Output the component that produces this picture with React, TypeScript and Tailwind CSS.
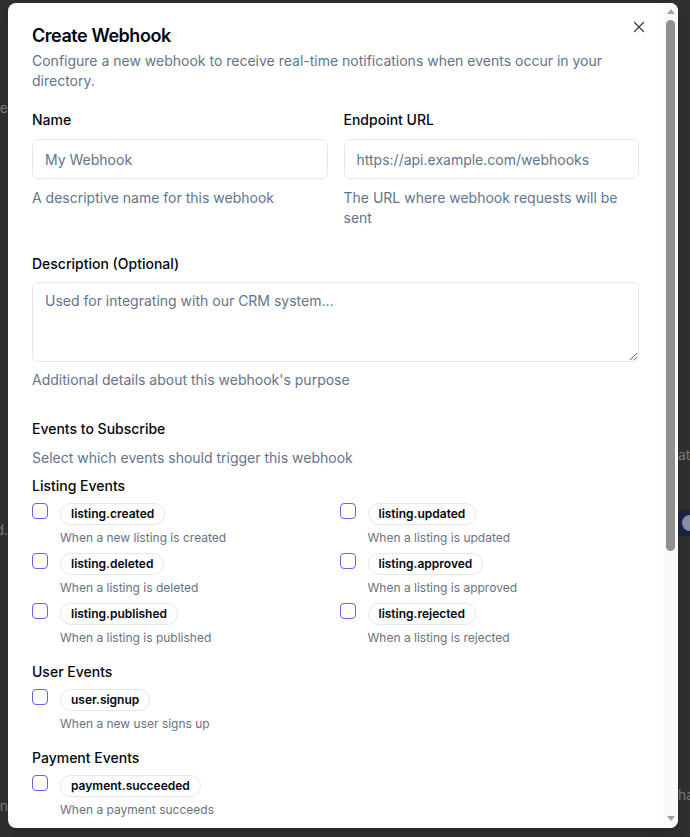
import { X } from "lucide-react";

type WebhookEvent = {
  name: string;
  description: string;
};

type EventGroup = {
  label: string;
  events: WebhookEvent[];
};

const eventGroups: EventGroup[] = [
  {
    label: "Listing Events",
    events: [
      { name: "listing.created", description: "When a new listing is created" },
      { name: "listing.updated", description: "When a listing is updated" },
      { name: "listing.deleted", description: "When a listing is deleted" },
      { name: "listing.approved", description: "When a listing is approved" },
      { name: "listing.published", description: "When a listing is published" },
      { name: "listing.rejected", description: "When a listing is rejected" },
    ],
  },
  {
    label: "User Events",
    events: [{ name: "user.signup", description: "When a new user signs up" }],
  },
  {
    label: "Payment Events",
    events: [{ name: "payment.succeeded", description: "When a payment succeeds" }],
  },
];

const font = { fontFamily: "Inter, 'Noto Sans', sans-serif" };

const EventOption = ({ event }: { event: WebhookEvent }) => (
  <label className="flex items-start gap-3">
    <span className="h-4 w-4 shrink-0 rounded-[4px] border border-[#6366f1] bg-white" />
    <span className="flex flex-col">
      <span className="inline-flex w-fit items-center rounded-full border border-gray-200 px-2.5 py-0.5 text-xs font-semibold leading-4 text-gray-950">
        {event.name}
      </span>
      <span className="mt-[5px] text-xs leading-4 text-gray-500">{event.description}</span>
    </span>
  </label>
);

// light scrollbar on the right edge of the dialog
const Scrollbar = () => (
  <div className="flex h-full w-[15px] shrink-0 flex-col items-center bg-[#fafafa]">
    <span className="mt-[6px] h-0 w-0 border-x-[4.5px] border-b-[5px] border-x-transparent border-b-[#a3a3a3]" />
    <span className="mt-[6px] h-[531px] w-[9px] rounded-full bg-[#8f8f8f]" />
    <span className="flex-1" />
    <span className="mb-[7px] h-0 w-0 border-x-[4.5px] border-t-[5px] border-x-transparent border-t-[#a3a3a3]" />
  </div>
);

// page behind the overlay, only its edges show
const Backdrop = () => (
  <div className="flex h-full w-full justify-between text-sm text-[#7a7a7a]">
    <div className="flex w-2 flex-col items-end overflow-hidden">
      <span className="mt-[98px] whitespace-nowrap">e</span>
      <span className="mt-[402px] whitespace-nowrap">d.</span>
      <span className="mt-[256px] whitespace-nowrap">n</span>
    </div>
    <div className="flex w-3 flex-col overflow-hidden">
      <span className="mt-[445px] whitespace-nowrap">at</span>
      <div className="mt-[45px] flex h-[26px] w-[40px] items-center bg-[#1b2245] pl-1">
        <span className="h-4 w-4 rounded-full bg-[#8a8fa8]" />
      </div>
      <span className="mt-[249px] whitespace-nowrap">ha</span>
    </div>
  </div>
);

export default function App() {
  return (
    <div className="relative h-[837px] w-full overflow-hidden bg-[#2f2f2f]" style={font}>
      <Backdrop />

      <div className="absolute left-2 top-[3px] flex h-[825px] w-[670px] overflow-hidden rounded-lg bg-white shadow-lg">
        <div className="relative min-w-0 flex-1 overflow-hidden p-6">
          <button className="absolute right-[15px] top-[15px] text-gray-700">
            <X size={18} strokeWidth={1.75} />
          </button>

          {/* Header */}
          <h2 className="text-lg font-semibold leading-none tracking-tight text-gray-950">
            Create Webhook
          </h2>
          <p className="mt-1.5 text-sm leading-5 text-slate-500">
            Configure a new webhook to receive real-time notifications when events occur in your
            directory.
          </p>

          {/* Form */}
          <div className="mt-[19px] flex flex-col">
            <div className="grid grid-cols-2 gap-4">
              <div className="flex flex-col">
                <span className="text-sm font-medium leading-5 text-gray-950">Name</span>
                <input
                  className="mt-[9px] h-10 rounded-md border border-gray-200 px-3 text-sm placeholder:text-slate-500"
                  placeholder="My Webhook"
                />
                <span className="mt-[9px] text-sm leading-5 text-slate-500">
                  A descriptive name for this webhook
                </span>
              </div>
              <div className="flex flex-col">
                <span className="text-sm font-medium leading-5 text-gray-950">Endpoint URL</span>
                <input
                  className="mt-[9px] h-10 rounded-md border border-gray-200 px-3 text-sm placeholder:text-slate-500"
                  placeholder="https://api.example.com/webhooks"
                />
                <span className="mt-[9px] text-sm leading-5 text-slate-500">
                  The URL where webhook requests will be sent
                </span>
              </div>
            </div>

            <div className="mt-[26px] flex flex-col">
              <span className="text-sm font-medium leading-5 text-gray-950">
                Description (Optional)
              </span>
              <textarea
                className="mt-2 h-20 rounded-md border border-gray-200 px-3 py-2 text-sm placeholder:text-slate-500"
                placeholder="Used for integrating with our CRM system..."
              />
              <span className="mt-2 text-sm leading-5 text-slate-500">
                Additional details about this webhook's purpose
              </span>
            </div>

            <div className="mt-[29px] flex flex-col">
              <span className="text-sm font-medium leading-5 text-gray-950">
                Events to Subscribe
              </span>
              <span className="mt-[9px] text-sm leading-5 text-slate-500">
                Select which events should trigger this webhook
              </span>

              <div className="mt-2 flex flex-col gap-4">
                {eventGroups.map((group) => (
                  <div key={group.label} className="flex flex-col">
                    <span className="text-sm font-medium leading-5 text-gray-950">
                      {group.label}
                    </span>
                    <div className="mt-[7px] grid grid-cols-2 gap-x-2 gap-y-[7px]">
                      {group.events.map((event) => (
                        <EventOption key={event.name} event={event} />
                      ))}
                    </div>
                  </div>
                ))}
              </div>
            </div>
          </div>
        </div>

        <Scrollbar />
      </div>
    </div>
  );
}
